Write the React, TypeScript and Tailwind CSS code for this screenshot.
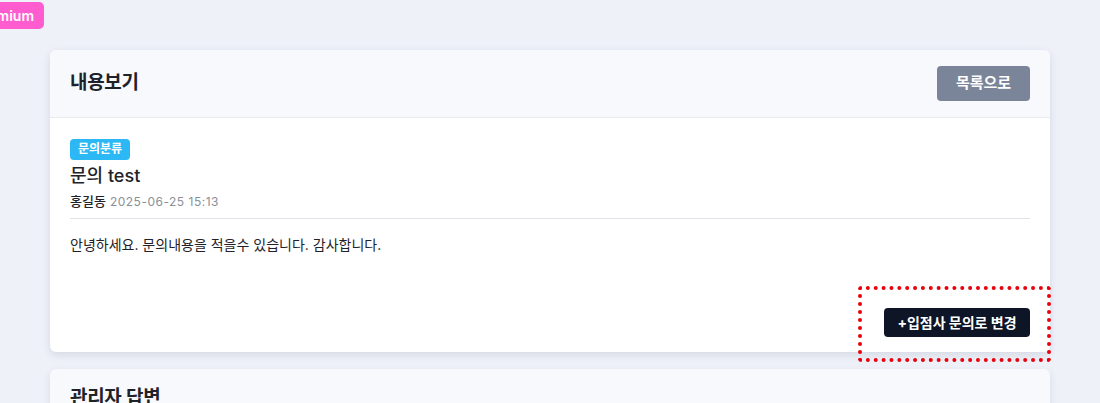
import React from "react";

const font = { fontFamily: "Inter, 'Noto Sans CJK KR', sans-serif" };

export default function App() {
  return (
    <div className="min-h-[403px] w-[1100px] overflow-hidden bg-[#eef1f8] text-[#1f2329]" style={font}>
      <div className="relative h-[50px]">
        <div className="absolute right-[1056px] top-[2px] flex h-[27px] items-center whitespace-nowrap rounded-[5px] bg-[#ff5ccf] pl-[8px] pr-[10px] text-[14px] font-semibold text-white">
          Premium
        </div>
      </div>
      <div className="mx-[50px] flex flex-col gap-[17px]">
        <div className="rounded-[6px] bg-white shadow-[0_3px_8px_rgba(30,40,80,0.12)]">
          <div className="flex h-[68px] items-center justify-between rounded-t-[6px] border-b border-[#e8ebf0] bg-[#f8f9fc] px-[20px]">
            <div className="text-[19px] font-semibold tracking-[-0.3px]">내용보기</div>
            <button className="flex h-[35px] w-[93px] items-center justify-center rounded-[4px] bg-[#7a8599] text-[15px] font-bold text-white">
              목록으로
            </button>
          </div>
          <div className="px-[20px] pb-[15px] pt-[17px]">
            <div className="inline-flex h-[21px] items-center rounded-[4px] bg-[#2bb8f5] px-[8px] text-[12px] font-bold text-white">
              문의분류
            </div>
            <div className="mt-[3px] text-[18px] font-medium leading-[26px]">문의 test</div>
            <div className="mt-[2px] flex items-baseline gap-[4px] leading-[20px]">
              <span className="text-[13px] font-medium">홍길동</span>
              <span className="text-[12px] tracking-[0.5px] text-[#8a8f98]">2025-06-25 15:13</span>
            </div>
            <div className="mt-[6px] border-t border-[#dfe2e7]" />
            <div className="mt-[16px] text-[14px] leading-[20px]">안녕하세요. 문의내용을 적을수 있습니다. 감사합니다.</div>
            <div className="mt-[53px] flex justify-end">
              <div className="relative">
                <button className="flex h-[29px] w-[146px] items-center justify-center rounded-[4px] bg-[#0d1526] text-[14px] font-bold text-white">
                  +입점사 문의로 변경
                </button>
                <div className="pointer-events-none absolute left-[-26px] top-[-22px] h-[76px] w-[193px] rounded-[4px] border-[4px] border-dotted border-[#e8000b]" />
              </div>
            </div>
          </div>
        </div>
        <div className="rounded-t-[6px] bg-[#f8f9fc] shadow-[0_3px_8px_rgba(30,40,80,0.10)]">
          <div className="flex h-[60px] items-center px-[20px]">
            <div className="text-[19px] font-semibold tracking-[-0.3px]">관리자 답변</div>
          </div>
        </div>
      </div>
    </div>
  );
}
